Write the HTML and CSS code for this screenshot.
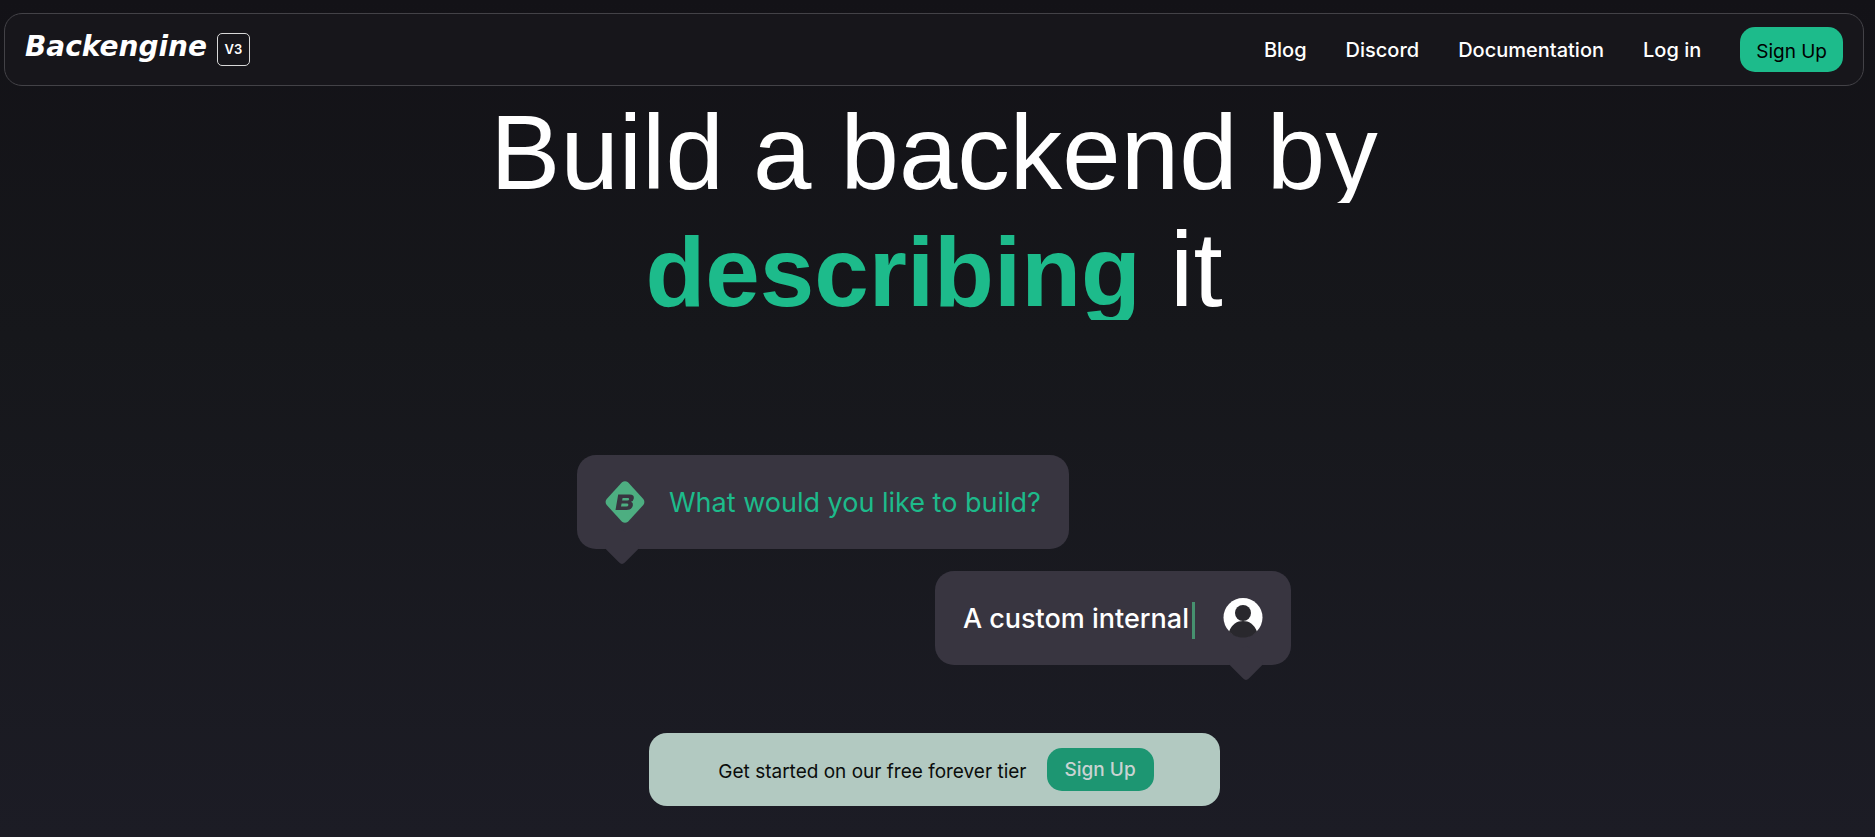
FILE: index.html
```html
<!DOCTYPE html>
<html lang="en">
<head>
<meta charset="utf-8">
<meta name="viewport" content="width=device-width, initial-scale=1">
<title>Backengine</title>
<link rel="stylesheet" href="styles.css">
</head>
<body>
<header class="header">
  <a class="brand" href="#"><span class="brand-name">Backengine</span><span class="version">V3</span></a>
  <nav class="nav">
    <a href="#">Blog</a>
    <a href="#">Discord</a>
    <a href="#">Documentation</a>
    <a href="#">Log in</a>
    <button class="button button-header" type="button">Sign Up</button>
  </nav>
</header>
<main class="main">
  <h1 class="title">
    <span class="title-line">Build a backend by</span>
    <span class="title-line"><strong>describing</strong> it</span>
  </h1>
  <section class="chat">
    <div class="bubble bubble-question">
      <svg class="icon" viewBox="0 0 40 42" aria-hidden="true">
        <path d="M17 1.300Q20 -1 23 1.300L38.300 18Q40.500 21 38.300 24L23 40.700Q20 43 17 40.700L1.700 24Q-.500 21 1.700 18Z" fill="#4dae81"/>
        <path fill-rule="evenodd" d="M13.200 13.500H24.500Q29.500 13.500 28.800 17.400 28.400 20 26 20.800 28.400 21.700 27.900 24.300 27.200 29 21.500 29H10.500ZM17.600 17 17.100 19.600H22.300Q24 19.600 24.200 18.200 24.300 17 22.800 17ZM16.600 22.500 16 25.500H21.300Q23.200 25.500 23.400 23.900 23.500 22.500 21.900 22.500Z" fill="#383540"/>
      </svg>
      <p>What would you like to build?</p>
    </div>
    <div class="bubble bubble-answer">
      <p>A custom internal<span class="caret"></span></p>
      <svg class="icon" viewBox="0 0 40 40" aria-hidden="true">
        <circle cx="20" cy="19.500" r="19.500" fill="#fff"/>
        <circle cx="20" cy="15" r="8" fill="#29282d"/>
        <path d="M6 33.500C9 26 14 23 20 23s11 3 14 10.500C30 38 25 39.500 20 39.500S10 38 6 33.500Z" fill="#29282d"/>
      </svg>
    </div>
  </section>
  <section class="cta">
    <p>Get started on our free forever tier</p>
    <button class="button button-cta" type="button">Sign Up</button>
  </section>
</main>
</body>
</html>
```
FILE: styles.css
```css
* {
  box-sizing: border-box;
}

body {
  margin: 0;
  min-height: 100vh;
  padding: 13px 11px 31px 4px;
  background: linear-gradient(#131217, #16171b 40%, #1c1c25);
  color: #fff;
  font-family: Inter, "Liberation Sans", sans-serif;
}

p,
h1 {
  margin: 0;
}

.header {
  display: flex;
  justify-content: space-between;
  align-items: center;
  padding: 13px 20px;
  border: 1px solid #434247;
  border-radius: 18px;
  background: #17161b;
}

.brand {
  display: flex;
  align-items: flex-start;
  gap: 10px;
  color: #fff;
  text-decoration: none;
}

.brand-name {
  font: italic bold 28px/28px "DejaVu Sans", sans-serif;
}

.version {
  width: 33px;
  border: 1px solid #d8d8d8;
  border-radius: 5px;
  font-size: 13px;
  font-weight: 600;
  line-height: 31px;
  text-align: center;
}

.nav {
  display: flex;
  align-items: center;
  gap: 39px;
  font-size: 20px;
  font-weight: 500;
}

.nav a {
  color: #fff;
  text-decoration: none;
}

.button {
  border: 0;
  padding: 0 16px;
  border-radius: 15px;
  font-family: inherit;
  font-size: 19px;
  cursor: pointer;
}

.button-header {
  height: 45px;
  padding-top: 4px;
  background: #1dbb8b;
  color: #000;
}

.main {
  display: flex;
  flex-direction: column;
  align-items: center;
}

.title {
  padding-bottom: 135px;
  font-family: "Liberation Sans", Arial, sans-serif;
  font-size: 105px;
  font-weight: 400;
  line-height: 133px;
  text-align: center;
}

/* Each line hides the lower part of its descenders. */
.title-line {
  display: block;
  height: 117px;
  overflow: hidden;
}

.title strong {
  color: #1dbb8b;
  font-size: 98px;
}

.chat {
  display: flex;
  flex-direction: column;
  gap: 22px;
  width: 100%;
  max-width: 714px;
}

.bubble {
  position: relative;
  display: flex;
  align-items: center;
  gap: 24px;
  height: 94px;
  padding: 0 28px;
  border-radius: 19px;
  background: #383540;
  font-size: 27px;
  line-height: 40px;
}

.bubble p {
  padding-top: 2px;
}

.bubble::after {
  content: "";
  position: absolute;
  bottom: -11px;
  width: 26px;
  height: 26px;
  border-radius: 4px;
  background: #383540;
  transform: rotate(45deg);
}

.bubble-question {
  align-self: flex-start;
  color: #1dbb8b;
}

.bubble-question::after {
  left: 32px;
}

.bubble-answer {
  align-self: flex-end;
  gap: 28px;
  font-weight: 500;
}

.bubble-answer::after {
  right: 32px;
}

.icon {
  width: 40px;
  height: 42px;
}

.caret {
  display: inline-block;
  width: 3px;
  height: 37px;
  margin-left: 3px;
  background: #46916f;
  vertical-align: middle;
}

.cta {
  display: flex;
  align-items: center;
  justify-content: center;
  gap: 20px;
  width: 100%;
  max-width: 571px;
  height: 73px;
  margin-top: 68px;
  padding-left: 4px;
  border-radius: 18px;
  background: #b2c9c1;
  color: #0b0d0c;
  font-size: 19px;
}

.cta p {
  padding-top: 3px;
}

.button-cta {
  height: 43px;
  padding: 0 18px;
  background: #1d9672;
  color: #c9d3d2;
  font-weight: 500;
}
```
